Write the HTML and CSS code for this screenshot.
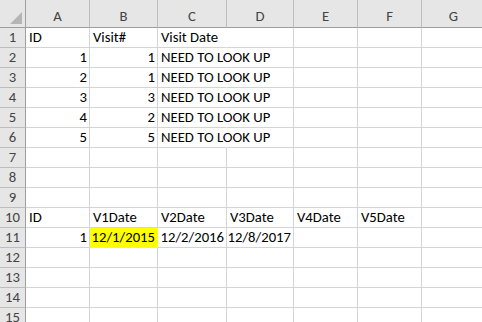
FILE: index.html
```html
<!DOCTYPE html>
<html lang="en">
<head>
    <meta charset="UTF-8">
    <title>Book1 - Excel</title>
    <link rel="stylesheet" href="styles.css">
</head>
<body>
    <div class="sheet">
        <!-- column headers -->
        <div class="corner"><span class="tri"></span></div>
        <div class="col-head">A</div>
        <div class="col-head">B</div>
        <div class="col-head">C</div>
        <div class="col-head">D</div>
        <div class="col-head">E</div>
        <div class="col-head">F</div>
        <div class="col-head">G</div>

        <div class="row-head">1</div>
        <div class="cell">ID</div>
        <div class="cell">Visit#</div>
        <div class="cell overflow">Visit Date</div>
        <div class="cell"></div>
        <div class="cell"></div>
        <div class="cell"></div>
        <div class="cell"></div>

        <div class="row-head">2</div>
        <div class="cell num">1</div>
        <div class="cell num">1</div>
        <div class="cell overflow">NEED TO LOOK UP</div>
        <div class="cell"></div>
        <div class="cell"></div>
        <div class="cell"></div>
        <div class="cell"></div>

        <div class="row-head">3</div>
        <div class="cell num">2</div>
        <div class="cell num">1</div>
        <div class="cell overflow">NEED TO LOOK UP</div>
        <div class="cell"></div>
        <div class="cell"></div>
        <div class="cell"></div>
        <div class="cell"></div>

        <div class="row-head">4</div>
        <div class="cell num">3</div>
        <div class="cell num">3</div>
        <div class="cell overflow">NEED TO LOOK UP</div>
        <div class="cell"></div>
        <div class="cell"></div>
        <div class="cell"></div>
        <div class="cell"></div>

        <div class="row-head">5</div>
        <div class="cell num">4</div>
        <div class="cell num">2</div>
        <div class="cell overflow">NEED TO LOOK UP</div>
        <div class="cell"></div>
        <div class="cell"></div>
        <div class="cell"></div>
        <div class="cell"></div>

        <div class="row-head">6</div>
        <div class="cell num">5</div>
        <div class="cell num">5</div>
        <div class="cell overflow">NEED TO LOOK UP</div>
        <div class="cell"></div>
        <div class="cell"></div>
        <div class="cell"></div>
        <div class="cell"></div>

        <div class="row-head">7</div>
        <div class="cell"></div><div class="cell"></div><div class="cell"></div><div class="cell"></div><div class="cell"></div><div class="cell"></div><div class="cell"></div>

        <div class="row-head">8</div>
        <div class="cell"></div><div class="cell"></div><div class="cell"></div><div class="cell"></div><div class="cell"></div><div class="cell"></div><div class="cell"></div>

        <div class="row-head">9</div>
        <div class="cell"></div><div class="cell"></div><div class="cell"></div><div class="cell"></div><div class="cell"></div><div class="cell"></div><div class="cell"></div>

        <div class="row-head">10</div>
        <div class="cell">ID</div>
        <div class="cell">V1Date</div>
        <div class="cell">V2Date</div>
        <div class="cell">V3Date</div>
        <div class="cell">V4Date</div>
        <div class="cell">V5Date</div>
        <div class="cell"></div>

        <div class="row-head">11</div>
        <div class="cell num">1</div>
        <div class="cell num highlight">12/1/2015</div>
        <div class="cell num">12/2/2016</div>
        <div class="cell num">12/8/2017</div>
        <div class="cell"></div>
        <div class="cell"></div>
        <div class="cell"></div>

        <div class="row-head">12</div>
        <div class="cell"></div><div class="cell"></div><div class="cell"></div><div class="cell"></div><div class="cell"></div><div class="cell"></div><div class="cell"></div>

        <div class="row-head">13</div>
        <div class="cell"></div><div class="cell"></div><div class="cell"></div><div class="cell"></div><div class="cell"></div><div class="cell"></div><div class="cell"></div>

        <div class="row-head">14</div>
        <div class="cell"></div><div class="cell"></div><div class="cell"></div><div class="cell"></div><div class="cell"></div><div class="cell"></div><div class="cell"></div>

        <div class="row-head">15</div>
        <div class="cell"></div><div class="cell"></div><div class="cell"></div><div class="cell"></div><div class="cell"></div><div class="cell"></div><div class="cell"></div>
    </div>
</body>
</html>
```

FILE: styles.css
```css
:root {
    --grid-color: #d4d4d4;
    --head-bg: #e6e6e6;
    --head-text: #444444;
    --head-line: #bdbdbd;
    --head-edge: #9e9e9e;
    --fill-yellow: #ffff00;
}

* {
    margin: 0;
    padding: 0;
    box-sizing: border-box;
}

body {
    background-color: #ffffff;
    font-family: 'Carlito', 'Lato', sans-serif;
    font-size: 14.7px;
    color: #000000;
    overflow: hidden;
}

.sheet {
    display: grid;
    grid-template-columns: 26px 64px 68px 69px 67px 64px 64px 64px;
    grid-template-rows: 28px;
    grid-auto-rows: 20px;
}

.corner {
    position: relative;
    background-color: var(--head-bg);
    border-right: 1px solid var(--head-edge);
    border-bottom: 1px solid var(--head-edge);
}

/* little triangle in the select-all corner */
.corner .tri {
    position: absolute;
    right: 3px;
    bottom: 3px;
    width: 0;
    height: 0;
    border-left: 12px solid transparent;
    border-bottom: 12px solid #b5b5b5;
}

.col-head {
    display: flex;
    align-items: center;
    justify-content: center;
    padding-top: 5px;
    background-color: var(--head-bg);
    color: var(--head-text);
    border-right: 1px solid var(--head-line);
    border-bottom: 1px solid var(--head-edge);
}

.row-head {
    display: flex;
    align-items: flex-end;
    justify-content: center;
    padding-bottom: 1px;
    background-color: var(--head-bg);
    color: var(--head-text);
    border-right: 1px solid var(--head-edge);
    border-bottom: 1px solid var(--head-line);
}

.cell {
    display: flex;
    align-items: flex-end;
    padding: 0 3px 1px 3px;
    border-right: 1px solid var(--grid-color);
    border-bottom: 1px solid var(--grid-color);
    white-space: nowrap;
    line-height: 18px;
}

.cell.num {
    justify-content: flex-end;
    padding-right: 2px;
}

/* text that spills into the empty cell to the right */
.cell.overflow {
    overflow: visible;
    border-right-color: transparent;
    position: relative;
    z-index: 1;
}

.cell.highlight {
    background-color: var(--fill-yellow);
    border-color: var(--fill-yellow);
}
```
